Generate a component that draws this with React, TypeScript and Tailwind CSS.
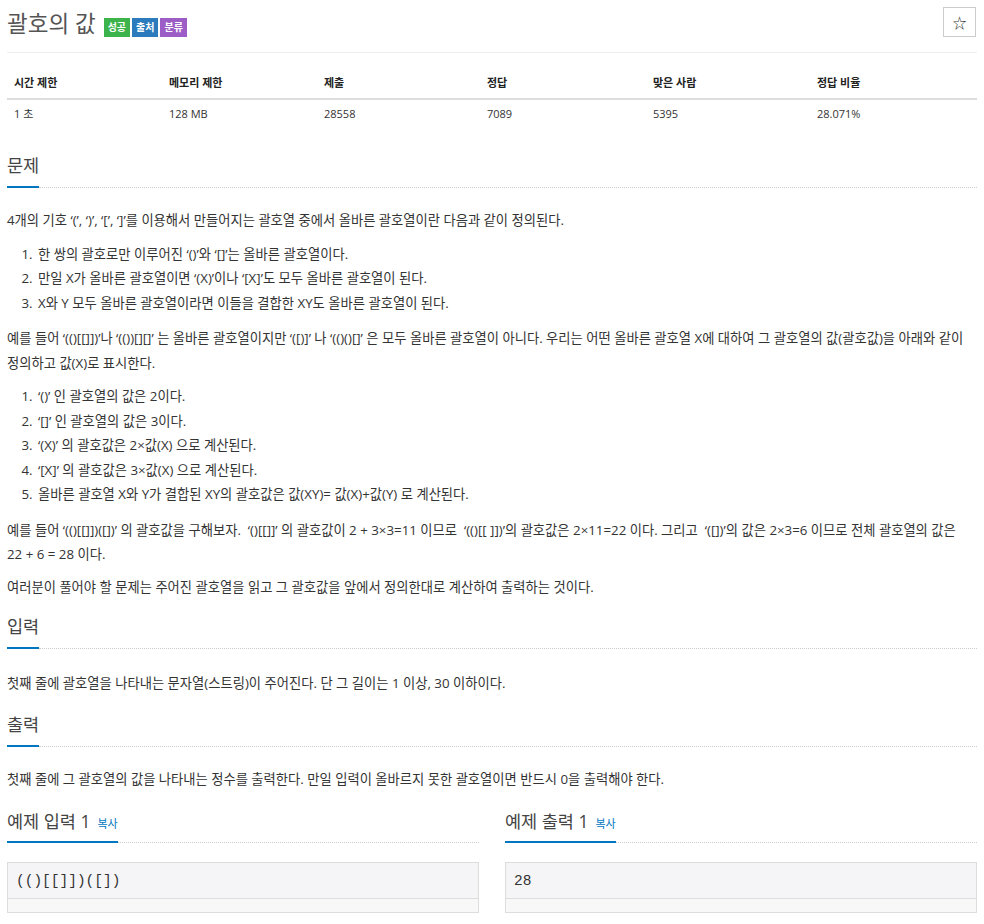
const font = "font-['Open_Sans','Noto_Sans_CJK_KR',sans-serif]";

function SectionTitle({ children }: { children: React.ReactNode }) {
    return (
        <div className="flex items-end">
            <h2 className="border-b-2 border-[#0076c0] pb-[8px] text-[17.5px] leading-[26px] text-[#444]">
                {children}
            </h2>
            <div className="flex-1 border-b border-dotted border-[#ccc]" />
        </div>
    );
}

function SampleBox({ title, data }: { title: string; data: string }) {
    return (
        <div>
            <div className="flex items-end">
                <h2 className="flex items-baseline border-b-2 border-[#0076c0] pb-[4px] text-[17.5px] leading-[26px] text-[#444]">
                    {title}
                    <span className="ml-[7px] text-[11px] text-[#0076c0]">복사</span>
                </h2>
                <div className="flex-1 border-b border-dotted border-[#ccc]" />
            </div>
            <div className="mt-[19px] border border-[#ddd]">
                <pre className="h-[36px] border-b border-[#ddd] bg-[#f5f5f7] pl-[8px] font-['Liberation_Mono',monospace] text-[14.5px] leading-[36px] text-[#333]">
                    {data}
                </pre>
                <div className="h-[13px] bg-[#f8f8f9]" />
            </div>
        </div>
    );
}

const headers = ['시간 제한', '메모리 제한', '제출', '정답', '맞은 사람', '정답 비율'];
const values = ['1 초', '128 MB', '28558', '7089', '5395', '28.071%'];

export default function App() {
    return (
        <div className={`${font} bg-white px-[7px] pt-[7px] text-[#333]`} style={{ width: 984 }}>
            <div className="flex items-start justify-between border-b border-[#eee] pb-[13px]">
                <h1 className="mt-[2px] flex items-center text-[22.5px] leading-[30px] text-[#555]">
                    괄호의 값
                    <span className="ml-[8px] mt-[6px] flex gap-[2px] text-[10px] font-bold leading-[19px] text-white">
                        <span className="bg-[#3cb44b] px-[4px]">성공</span>
                        <span className="bg-[#2b7bbd] px-[4px]">출처</span>
                        <span className="bg-[#9c5ec6] px-[4px]">분류</span>
                    </span>
                </h1>
                <button className="mr-px flex h-[30px] w-[33px] items-center justify-center border border-[#ccc] bg-white text-[14px] text-[#333]">
                    ☆
                </button>
            </div>

            <div className="mt-[15px] text-[11px]">
                <div className="grid h-[32px] grid-cols-[155px_155px_163px_166px_164px_1fr] items-center border-b-2 border-[#ddd] font-bold text-[#222]">
                    {headers.map((h) => (
                        <div key={h} className="px-[7px]">{h}</div>
                    ))}
                </div>
                <div className="grid h-[28px] grid-cols-[155px_155px_163px_166px_164px_1fr] items-center">
                    {values.map((v) => (
                        <div key={v} className="px-[7px]">{v}</div>
                    ))}
                </div>
            </div>

            <div className="mt-[24px]">
                <SectionTitle>문제</SectionTitle>
                <div className="mt-[20px] text-[13.3px] leading-[24.5px]">
                    <p>4개의 기호 ‘(’, ‘)’, ‘[’, ‘]’를 이용해서 만들어지는 괄호열 중에서 올바른 괄호열이란 다음과 같이 정의된다.</p>
                    <ol className="mt-[9px] list-decimal pl-[29px]">
                        <li className="pl-[2px]">한 쌍의 괄호로만 이루어진 ‘()’와 ‘[]’는 올바른 괄호열이다.</li>
                        <li className="pl-[2px]">만일 X가 올바른 괄호열이면 ‘(X)’이나 ‘[X]’도 모두 올바른 괄호열이 된다.</li>
                        <li className="pl-[2px]">X와 Y 모두 올바른 괄호열이라면 이들을 결합한 XY도 올바른 괄호열이 된다.</li>
                    </ol>
                    <p className="mt-[11px]">
                        예를 들어 ‘(()[[]])’나 ‘(())[][]’ 는 올바른 괄호열이지만 ‘([)]’ 나 ‘(()()[]’ 은 모두 올바른 괄호열이 아니다. 우리는 어떤 올바른 괄호열 X에 대하여 그 괄호열의 값(괄호값)을 아래와 같이 정의하고 값(X)로 표시한다.
                    </p>
                    <ol className="mt-[9px] list-decimal pl-[29px]">
                        <li className="pl-[2px]">‘()’ 인 괄호열의 값은 2이다.</li>
                        <li className="pl-[2px]">‘[]’ 인 괄호열의 값은 3이다.</li>
                        <li className="pl-[2px]">‘(X)’ 의 괄호값은 2×값(X) 으로 계산된다.</li>
                        <li className="pl-[2px]">‘[X]’ 의 괄호값은 3×값(X) 으로 계산된다.</li>
                        <li className="pl-[2px]">올바른 괄호열 X와 Y가 결합된 XY의 괄호값은 값(XY)= 값(X)+값(Y) 로 계산된다.</li>
                    </ol>
                    <p className="mt-[11px]">
                        {'예를 들어 ‘(()[[]])([])’ 의 괄호값을 구해보자.\u00a0 ‘()[[]]’ 의 괄호값이 2 + 3×3=11 이므로\u00a0 ‘(()[[ ]])’의 괄호값은 2×11=22 이다. 그리고\u00a0 ‘([])’의 값은 2×3=6 이므로 전체 괄호열의 값은 22\u00a0+\u00a06 = 28 이다.'}
                    </p>
                    <p className="mt-[8px]">여러분이 풀어야 할 문제는 주어진 괄호열을 읽고 그 괄호값을 앞에서 정의한대로 계산하여 출력하는 것이다.</p>
                </div>
            </div>

            <div className="mt-[14px]">
                <SectionTitle>입력</SectionTitle>
                <p className="mt-[22px] text-[13.3px] leading-[24.5px]">
                    첫째 줄에 괄호열을 나타내는 문자열(스트링)이 주어진다. 단 그 길이는 1 이상, 30 이하이다.
                </p>
            </div>

            <div className="mt-[15px]">
                <SectionTitle>출력</SectionTitle>
                <p className="mt-[20px] text-[13.3px] leading-[24.5px]">
                    첫째 줄에 그 괄호열의 값을 나타내는 정수를 출력한다. 만일 입력이 올바르지 못한 괄호열이면 반드시 0을 출력해야 한다.
                </p>
            </div>

            <div className="mt-[17px] grid grid-cols-2 gap-x-[26px] pb-[10px]">
                <SampleBox title="예제 입력 1" data="(()[[]])([])" />
                <SampleBox title="예제 출력 1" data="28" />
            </div>
        </div>
    );
}
